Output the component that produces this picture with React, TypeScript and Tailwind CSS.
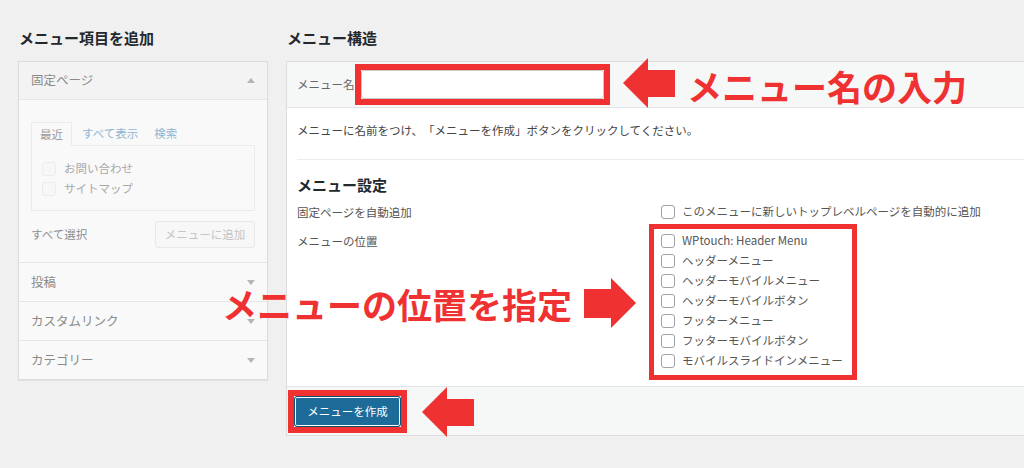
import React from 'react';

const RED = '#ef3131';

const Caret: React.FC<{ up?: boolean }> = ({ up = false }) => (
  <svg width="8" height="5" viewBox="0 0 8 5" className="shrink-0">
    <polygon points={up ? '0,5 4,0 8,5' : '0,0 8,0 4,5'} fill="#b5b5b5" />
  </svg>
);

const Box: React.FC<{ faint?: boolean }> = ({ faint = false }) => (
  <span
    className={`inline-block w-[14px] h-[14px] rounded-[3px] border shrink-0 ${
      faint ? 'border-[#ececec] bg-[#f7f7f7]' : 'border-[#9ea3a8] bg-white'
    }`}
  />
);

// big red pointer arrow used for annotations
const Arrow: React.FC<{ dir: 'left' | 'right'; className: string }> = ({ dir, className }) => (
  <svg width="52" height="50" viewBox="0 0 52 50" className={`absolute ${className}`}>
    <polygon
      points={
        dir === 'left'
          ? '0,25 25,0 25,12 52,12 52,39 25,39 25,50'
          : '0,11 27,11 27,0 52,25 27,50 27,40 0,40'
      }
      fill={RED}
    />
  </svg>
);

const LOCATIONS = [
  'WPtouch: Header Menu',
  'ヘッダーメニュー',
  'ヘッダーモバイルメニュー',
  'ヘッダーモバイルボタン',
  'フッターメニュー',
  'フッターモバイルボタン',
  'モバイルスライドインメニュー',
];

const ItemSources: React.FC = () => (
  <div className="w-[250px] shrink-0">
    <h2 className="h-[22px] leading-[22px] text-[15px] font-bold text-[#23282d] mb-[12px] pl-[1px]">
      メニュー項目を追加
    </h2>
    <div className="border border-[#dcdcde] bg-[#f9f9f9] shadow-[0_1px_1px_rgba(0,0,0,0.06)]">
      {/* 固定ページ (open) */}
      <div className="h-[38px] flex items-center justify-between px-[12px] bg-[#f3f3f3] border-b border-[#e6e6e6]">
        <span className="text-[12.5px] text-[#8a8a8a]">固定ページ</span>
        <Caret up />
      </div>
      <div className="px-[12px] pt-[22px] pb-[14px]">
        <div className="flex items-end text-[11.5px] h-[23px]">
          <span className="h-[24px] px-[8px] flex items-center border border-b-0 border-[#ebebeb] bg-[#f9f9f9] text-[#9a9a9a] relative top-[1px]">
            最近
          </span>
          <span className="ml-[10px] h-[23px] flex items-center text-[#8fb5d3]">すべて表示</span>
          <span className="ml-[16px] h-[23px] flex items-center text-[#8fb5d3]">検索</span>
        </div>
        <div className="h-[66px] border border-[#ebebeb] pt-[13px] pl-[10px]">
          {['お問い合わせ', 'サイトマップ'].map((t) => (
            <label key={t} className="h-[20px] flex items-center gap-[8px] text-[11.5px] text-[#a8a8a8]">
              <Box faint />
              {t}
            </label>
          ))}
        </div>
        <div className="mt-[10px] flex items-center justify-between">
          <span className="text-[11.5px] text-[#8f8f8f]">すべて選択</span>
          <span className="w-[100px] h-[27px] flex items-center justify-center border border-[#e8e8e8] rounded-[3px] bg-[#f7f7f7] text-[11.5px] text-[#c4c4c4]">
            メニューに追加
          </span>
        </div>
      </div>
      {['投稿', 'カスタムリンク', 'カテゴリー'].map((t) => (
        <div
          key={t}
          className="h-[39px] flex items-center justify-between px-[12px] border-t border-[#e6e6e6]"
        >
          <span className="text-[12.5px] text-[#8a8a8a]">{t}</span>
          <Caret />
        </div>
      ))}
    </div>
  </div>
);

const MenuEditor: React.FC = () => (
  <div className="w-[760px] shrink-0 ml-[18px]">
    <h2 className="h-[22px] leading-[22px] text-[15px] font-bold text-[#23282d] mb-[12px] pl-[1px]">
      メニュー構造
    </h2>
    <div className="border border-[#dcdcde] bg-white">
      {/* name field */}
      <div className="h-[46px] flex items-center px-[10px] bg-[#f6f7f7] border-b border-[#e2e4e7]">
        <span className="text-[11.5px] text-[#666]">メニュー名</span>
        <div className="border-[6px] border-[#ef3131]">
          <div className="w-[243px] h-[29px] bg-white border border-[#c9c9c9] rounded-[3px]" />
        </div>
      </div>

      <div className="px-[10px] pt-[14px] pb-[6px]">
        <p className="h-[16px] leading-[16px] text-[11.5px] text-[#444] [text-spacing-trim:space-all]">
          メニューに名前をつけ、「メニューを作成」ボタンをクリックしてください。
        </p>
        <div className="mt-[21px] h-px bg-[#ececec]" />
        <h3 className="mt-[15px] h-[20px] leading-[20px] text-[15px] font-bold text-[#23282d]">
          メニュー設定
        </h3>

        <div className="mt-[7px] flex">
          <div className="w-[352px] shrink-0 h-[20px] leading-[20px] text-[11.5px] text-[#555]">
            固定ページを自動追加
          </div>
          <label className="pl-[12px] h-[20px] flex items-center gap-[7px] text-[11.5px] text-[#555]">
            <Box />
            このメニューに新しいトップレベルページを自動的に追加
          </label>
        </div>

        <div className="mt-[2px] flex">
          <div className="w-[352px] shrink-0 mt-[9px] h-[16px] leading-[16px] text-[11.5px] text-[#555]">
            メニューの位置
          </div>
          <div className="w-[208px] border-[5px] border-[#ef3131] pt-[2px] pb-[4px] pl-[7px]">
            {LOCATIONS.map((l) => (
              <label key={l} className="h-[20px] flex items-center gap-[7px] text-[11.5px] text-[#555]">
                <Box />
                {l}
              </label>
            ))}
          </div>
        </div>
      </div>

      {/* footer */}
      <div className="h-[49px] bg-[#f6f7f7] border-t border-[#e2e4e7] pt-[3px] pl-px">
        <div className="inline-block border-[6px] border-[#ef3131]">
          <button
            type="button"
            className="w-[107px] h-[31px] rounded-[3px] bg-[#1d6b99] text-white text-[11.5px] border border-[#0f4f74] shadow-[inset_0_0_0_1px_#ffffff]"
          >
            メニューを作成
          </button>
        </div>
      </div>
    </div>
  </div>
);

export default function App() {
  return (
    <div className="relative w-[1024px] h-[468px] overflow-hidden bg-[#f0f0f1] font-['Noto_Sans_CJK_JP','Noto_Sans',sans-serif]">
      <div className="flex pl-[18px] pt-[27px]">
        <ItemSources />
        <MenuEditor />
      </div>

      {/* annotations */}
      <Arrow dir="left" className="left-[623px] top-[58px]" />
      <span className="absolute left-[687px] top-[66px] text-[35px] leading-[40px] font-bold text-[#ef3131] whitespace-nowrap">
        メニュー名の入力
      </span>
      <span className="absolute left-[222px] top-[284px] text-[35px] leading-[40px] font-bold text-[#ef3131] whitespace-nowrap">
        メニューの位置を指定
      </span>
      <Arrow dir="right" className="left-[584px] top-[278px]" />
      <Arrow dir="left" className="left-[422px] top-[387px]" />
    </div>
  );
}
